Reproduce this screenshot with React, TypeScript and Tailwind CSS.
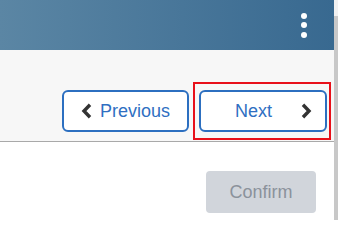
import React from "react";

const font = { fontFamily: '"Liberation Sans", Arial, sans-serif' };

function Chevron({ dir }: { dir: "left" | "right" }) {
  const points = dir === "left" ? "9,1.8 3,8 9,14.2" : "2,1.8 8,8 2,14.2";
  return (
    <svg width="11" height="16" viewBox="0 0 11 16" className="shrink-0">
      <polyline
        points={points}
        fill="none"
        stroke="#333333"
        strokeWidth="3.4"
        strokeLinejoin="miter"
        strokeLinecap="butt"
      />
    </svg>
  );
}

export default function App() {
  return (
    <div className="flex h-[220px] w-[338px] overflow-hidden bg-white" style={font}>
      <div className="flex min-w-0 flex-1 flex-col">
        {/* Top bar */}
        <header className="flex h-[50px] items-center justify-end bg-gradient-to-r from-[#5b86a4] to-[#386990] pr-[27px]">
          <button aria-label="More options" className="flex flex-col gap-[3.5px]">
            <span className="size-[6px] rounded-full bg-white" />
            <span className="size-[6px] rounded-full bg-white" />
            <span className="size-[6px] rounded-full bg-white" />
          </button>
        </header>

        {/* Step navigation */}
        <div className="flex justify-end gap-[10px] border-b border-[#a9a9a9] bg-[#f7f7f7] pb-[9px] pr-[7px] pt-[40px]">
          <button className="flex h-[42px] w-[127px] items-center justify-center gap-[8px] rounded-[6px] border-2 border-[#2c6fc0] bg-white text-[18px] text-[#2f6fc2]">
            <Chevron dir="left" />
            <span>Previous</span>
          </button>
          <div className="relative">
            <button className="flex h-[42px] w-[128px] items-center rounded-[6px] border-2 border-[#2c6fc0] bg-white pl-[34px] pr-[13px] text-[18px] text-[#2f6fc2]">
              <span>Next</span>
              <span className="ml-auto flex">
                <Chevron dir="right" />
              </span>
            </button>
            <span className="pointer-events-none absolute -bottom-[8px] -left-[6px] -right-[4px] -top-[8px] border-2 border-[#e8101a]" />
          </div>
        </div>

        {/* Footer */}
        <div className="flex justify-end pr-[18px] pt-[29px]">
          <button
            disabled
            className="flex h-[42px] w-[110px] items-center justify-center rounded-[4px] bg-[#d1d5db] text-[18px] text-[#8b929b]"
          >
            Confirm
          </button>
        </div>
      </div>

      {/* Scrollbar */}
      <div className="flex w-[4px] flex-col">
        <div className="h-[16px] bg-[#f1f1f1]" />
        <div className="flex-1 bg-[#c8c8c8]" />
      </div>
    </div>
  );
}
